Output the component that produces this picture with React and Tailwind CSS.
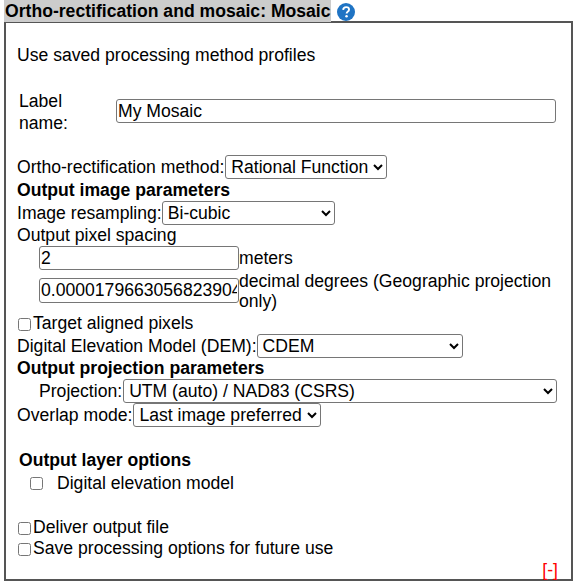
import React from "react";

const FIELD = "h-[24px] border border-[#767676] rounded-[3px] bg-white text-black px-[1px]";
const SELECT = "h-[24px] border border-[#767676] rounded-[3px] bg-white text-black pl-[1px]";

function HelpIcon() {
  return (
    <svg width="18" height="18" viewBox="0 0 20 20" className="ml-[6px] mt-[3px]">
      <circle cx="10" cy="10" r="10" fill="#1f74c4" />
      <path d="M6.8 7.6c.2-2 1.6-3 3.4-3 1.9 0 3.2 1.1 3.2 2.7 0 1.2-.7 1.9-1.6 2.5-.8.6-1.1.9-1.1 1.9" fill="none" stroke="#fff" strokeWidth="2.1" />
      <circle cx="10.6" cy="14.7" r="1.4" fill="#fff" />
    </svg>
  );
}

function Check({ className = "" }) {
  return <input type="checkbox" className={`w-[13px] h-[13px] ${className}`} />;
}

export default function App() {
  return (
    <div className="w-[574px] h-[586px] bg-white text-black text-[17.6px] leading-[22px] font-['Liberation_Sans',Arial,sans-serif]">
      {/* Title */}
      <div className="flex items-start pl-[4px] h-[22px]">
        <span className="bg-[#cccccc] font-bold pl-[1px] h-[22px]">Ortho-rectification and mosaic: Mosaic</span>
        <HelpIcon />
      </div>

      {/* Panel */}
      <div className="ml-[4px] mr-[1px] h-[560px] border-2 border-[#555555] flex flex-col -mt-[1px]">
        <div className="pl-[11px] pt-[21px]">Use saved processing method profiles</div>

        <div className="flex items-center pl-[13px] mt-[22px]">
          <div className="w-[97px] pt-[2px]">Label<br />name:</div>
          <input defaultValue="My Mosaic" className={`${FIELD} w-[440px]`} />
        </div>

        <div className="pl-[11px] mt-[21px] flex items-center">
          Ortho-rectification method:
          <select className={`${SELECT} w-[162px] ml-[1px]`}><option>Rational Function</option></select>
        </div>

        <div className="pl-[11px] font-bold">Output image parameters</div>

        <div className="pl-[11px] flex items-center">
          Image resampling:
          <select className={`${SELECT} w-[173px]`}><option>Bi-cubic</option></select>
        </div>

        <div className="pl-[11px] -mt-[1px]">Output pixel spacing</div>

        <div className="pl-[33px] flex items-start">
          <input defaultValue="2" className={`${FIELD} w-[200px] shrink-0`} />
          <span className="mt-[1px]">meters</span>
        </div>

        <div className="pl-[33px] flex items-start mt-[6px]">
          <input defaultValue="0.0000179663056823904" className={`${FIELD} w-[200px] h-[25px] shrink-0 mt-[2px]`} />
          <span className="w-[325px] -mt-[5px] leading-[20px]">decimal degrees (Geographic projection only)</span>
        </div>

        <div className="pl-[12px] flex items-center mt-[1px]">
          <Check className="mr-[2px] mt-[3px]" />
          Target aligned pixels
        </div>

        <div className="pl-[11px] flex items-center">
          Digital Elevation Model (DEM):
          <select className={`${SELECT} w-[206px]`}><option>CDEM</option></select>
        </div>

        <div className="pl-[11px] font-bold -mt-[1px]">Output projection parameters</div>

        <div className="pl-[33px] flex items-center">
          Projection:
          <select className={`${SELECT} w-[434px] ml-[1px]`}><option>UTM (auto) / NAD83 (CSRS)</option></select>
        </div>

        <div className="pl-[11px] flex items-center">
          Overlap mode:
          <select className={`${SELECT} w-[188px] ml-[1px]`}><option>Last image preferred</option></select>
        </div>

        <div className="pl-[13px] font-bold mt-[22px]">Output layer options</div>

        <div className="pl-[24px] flex items-center mt-[1px]">
          <Check className="mr-[14px]" />
          Digital elevation model
        </div>

        <div className="pl-[12px] flex items-center mt-[22px]">
          <Check className="mr-[2px] mt-[3px]" />
          Deliver output file
        </div>

        <div className="pl-[12px] flex items-center mt-[-1px]">
          <Check className="mr-[2px] mt-[3px]" />
          Save processing options for future use
        </div>

        <div className="mt-auto self-end pr-[13px] pb-[1px] text-[#ff0000]">[-]</div>
      </div>
    </div>
  );
}
